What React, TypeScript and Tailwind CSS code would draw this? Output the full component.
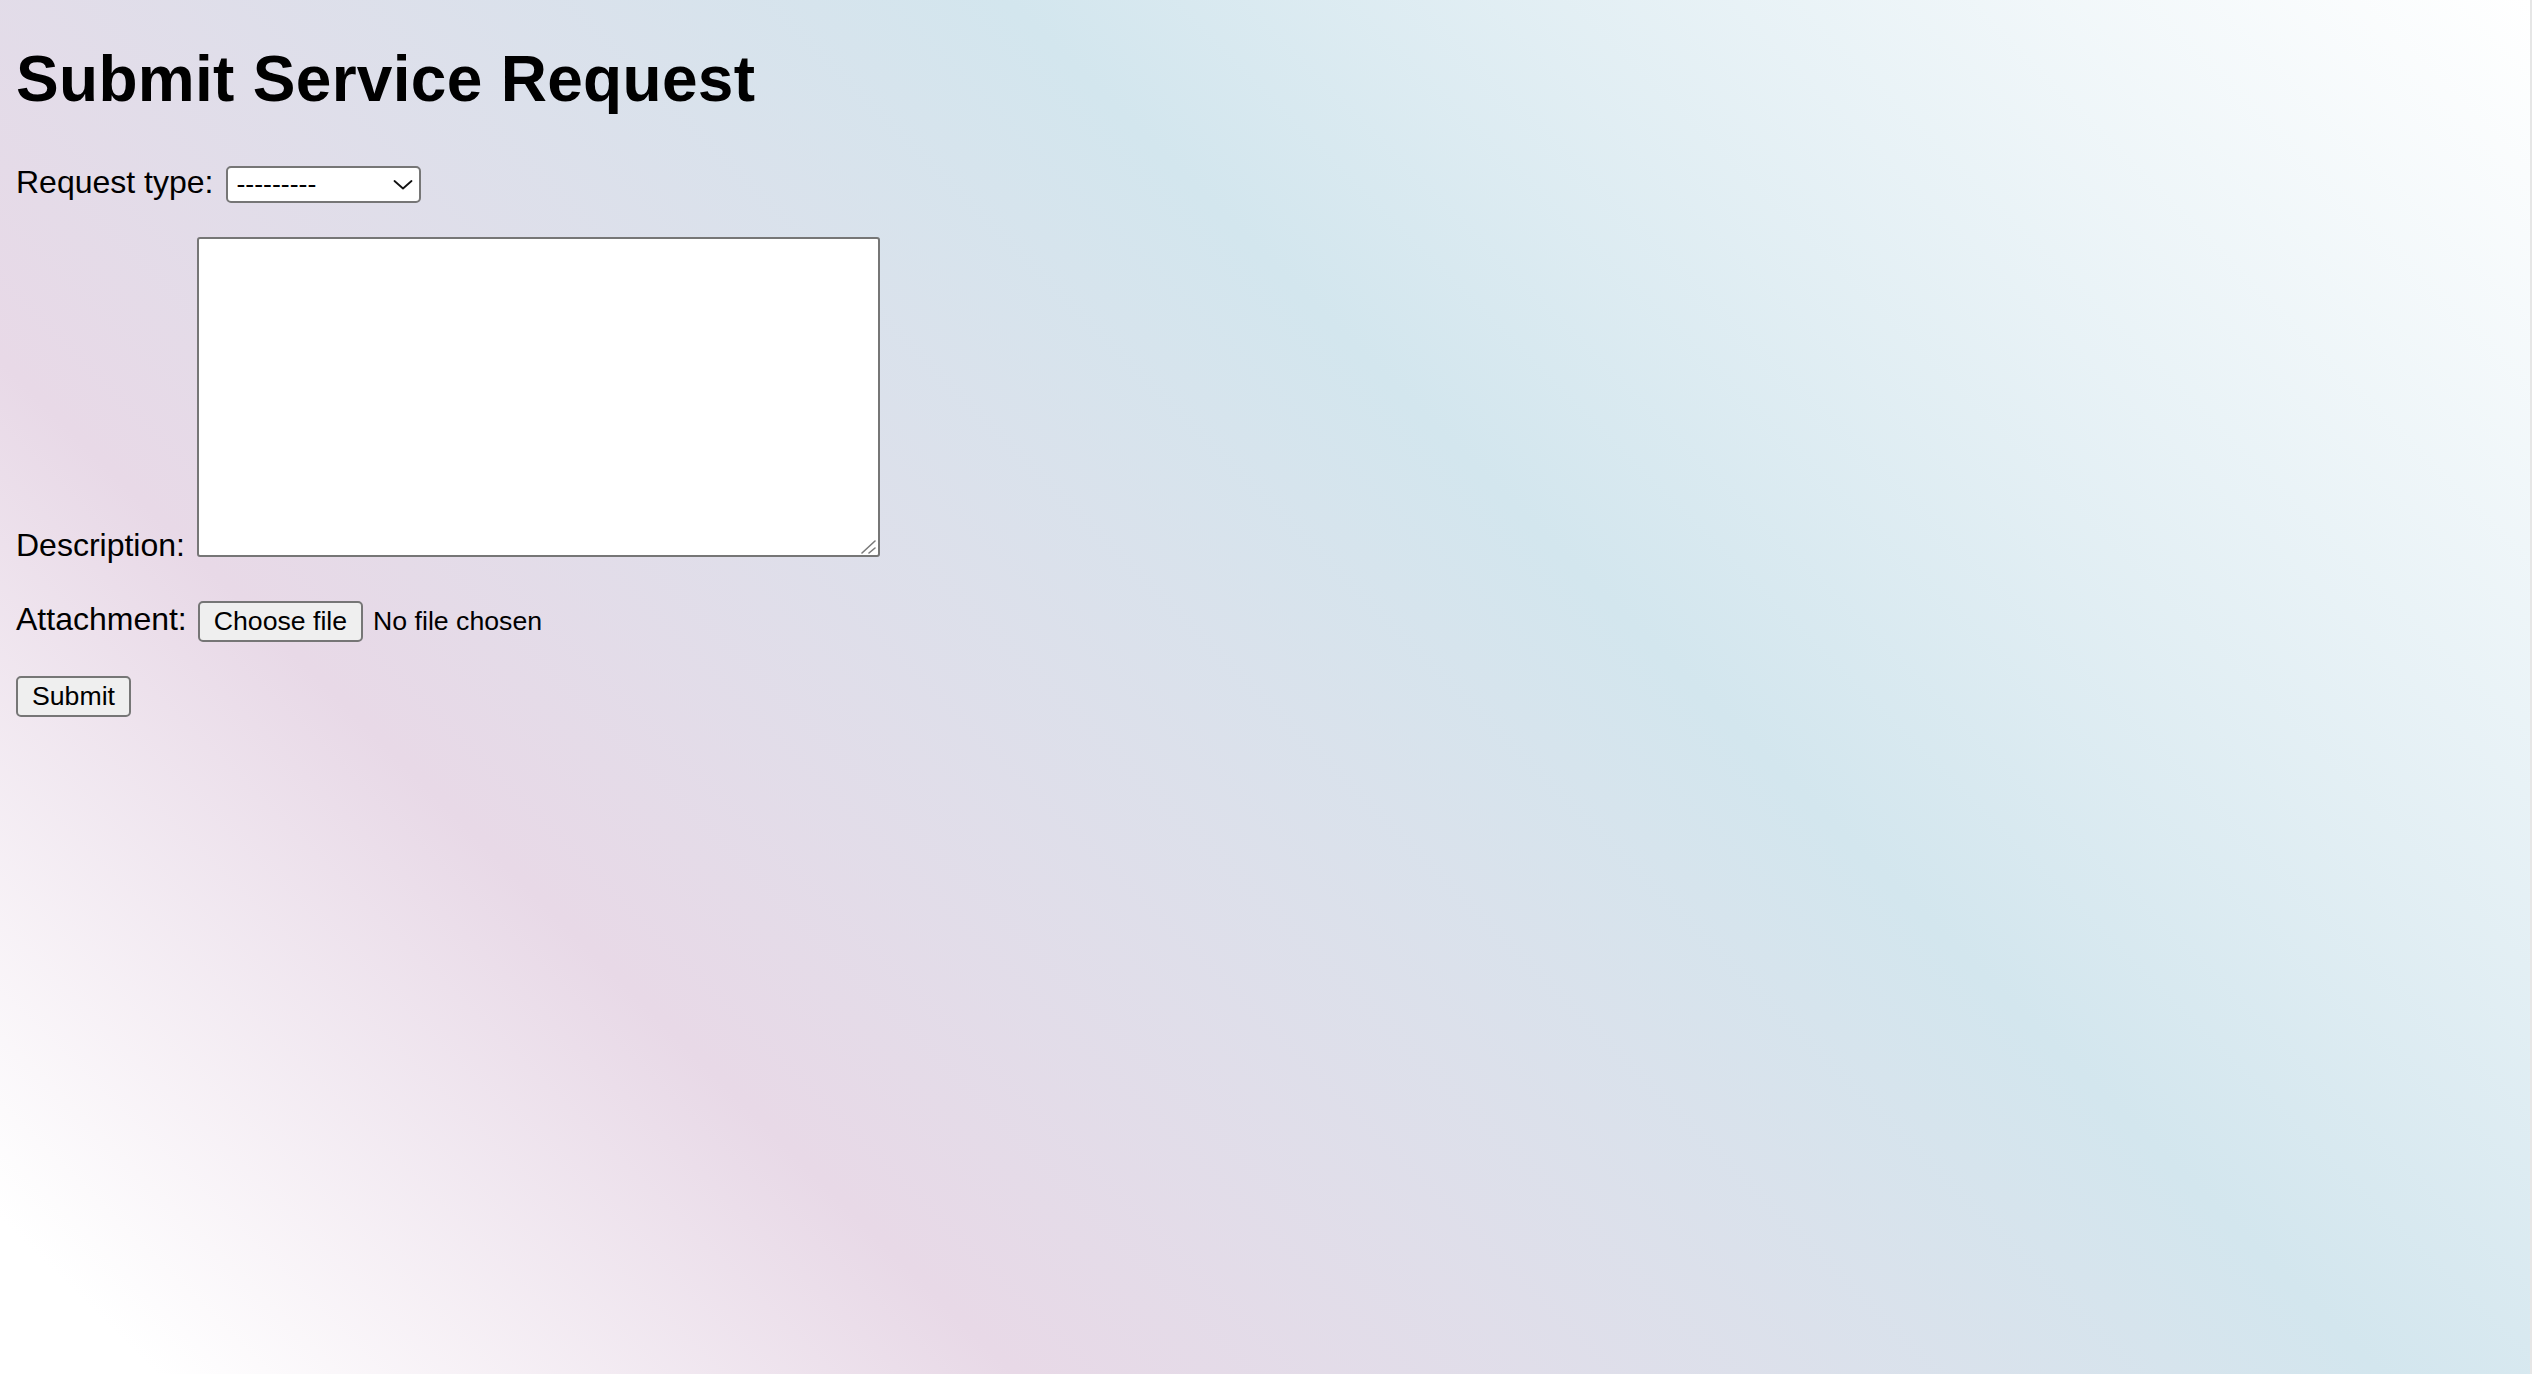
const font = "font-['Liberation_Sans',Arial,Helvetica,sans-serif]";

function ResizeGrip() {
  return (
    <svg
      className="pointer-events-none absolute right-[3px] bottom-[3px]"
      width="16"
      height="16"
      viewBox="0 0 16 16"
    >
      <line x1="1" y1="15" x2="14" y2="3" stroke="#7a7a7a" strokeWidth="1.6" strokeLinecap="round" />
      <line x1="8" y1="15" x2="14" y2="10" stroke="#7a7a7a" strokeWidth="1.6" strokeLinecap="round" />
    </svg>
  );
}

function SelectChevron() {
  return (
    <svg width="20" height="10" viewBox="0 0 20 10" fill="none">
      <polyline points="1.5,1 10,8.5 18.5,1" stroke="#111" strokeWidth="1.8" strokeLinecap="round" strokeLinejoin="round" />
    </svg>
  );
}

export default function App() {
  return (
    <div className={`flex min-h-screen w-full text-black ${font}`}>
      <main className="flex-1 bg-[linear-gradient(45deg,#ffffff_0%,#ffffff_4%,#e8d9e7_26%,#d3e6ee_61%,#ffffff_100%)] pl-4">
        {/* Heading */}
        <h1 className="mt-[42px] text-[64px] leading-[74px] font-bold tracking-[0.3px]">Submit Service Request</h1>

        <form className="flex flex-col items-start" onSubmit={(e) => e.preventDefault()}>
          {/* Request type */}
          <div className="mt-[50px] flex items-start gap-[13px]">
            <label className="text-[32px] leading-none">Request type:</label>
            <div className="flex h-[37px] w-[195px] items-center justify-between rounded-[5px] border-2 border-[#767676] bg-white pr-[6px] pl-[8px]">
              <span className="text-[26.67px] leading-none">---------</span>
              <SelectChevron />
            </div>
          </div>

          {/* Description */}
          <div className="mt-[34px] flex items-end gap-[12px]">
            <label className="text-[32px] leading-[24px]">Description:</label>
            <div className="relative">
              <textarea
                className="block h-[320px] w-[683px] resize-none rounded-[3px] border-2 border-[#767676] bg-white p-1 text-[26px] outline-none"
                defaultValue=""
              />
              <ResizeGrip />
            </div>
          </div>

          {/* Attachment */}
          <div className="mt-[44px] flex items-start">
            <label className="mt-[2px] mr-[11px] text-[32px] leading-none">Attachment:</label>
            <button
              type="button"
              className="h-[41px] rounded-[5px] border-2 border-[#767676] bg-[#efefef] px-[14px] text-[26.67px] leading-none"
            >
              Choose file
            </button>
            <span className="ml-[10px] text-[26.67px] leading-[41px]">No file chosen</span>
          </div>

          {/* Submit */}
          <button
            type="submit"
            className="mt-[34px] h-[41px] rounded-[5px] border-2 border-[#767676] bg-[#efefef] px-[14px] text-[26.67px] leading-none"
          >
            Submit
          </button>
        </form>
      </main>
      <div className="w-[2px] bg-[#e6e6e6]" />
    </div>
  );
}
